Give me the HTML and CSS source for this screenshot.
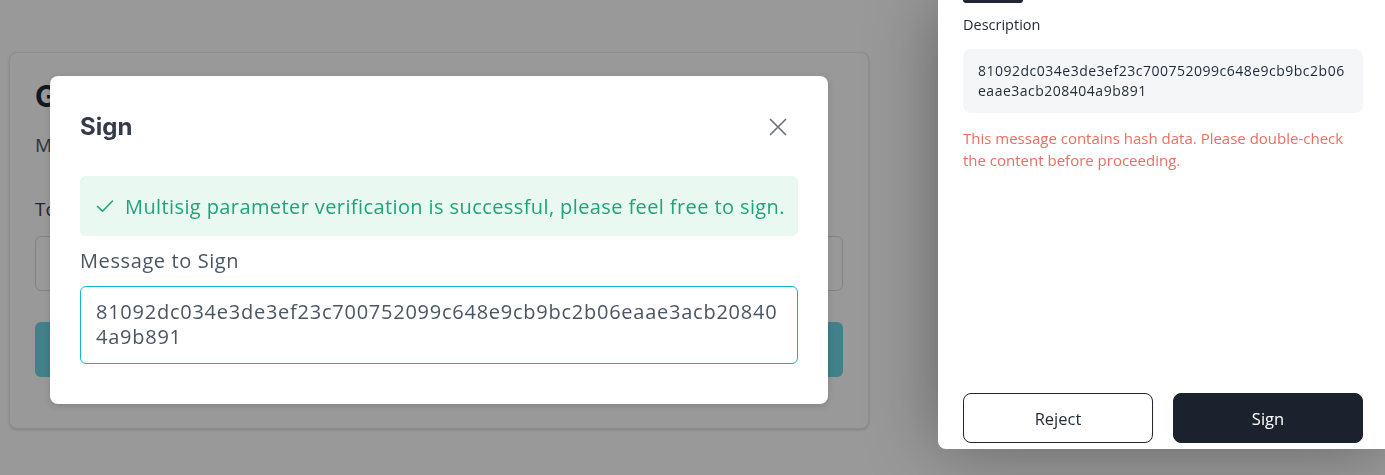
FILE: index.html
```html
<!DOCTYPE html>
<html lang="en">
<head>
<meta charset="utf-8">
<title>Sign</title>
<link rel="stylesheet" href="styles.css">
</head>
<body>
<main class="page">
  <section class="card">
    <h2 class="card-title">Generate Signature</h2>
    <p class="card-sub">Multisig message signing</p>
    <label class="card-label">To sign</label>
    <div class="card-input"></div>
    <div class="card-button"></div>
  </section>
</main>

<div class="backdrop"></div>

<div class="modal" role="dialog">
  <div class="modal-head">
    <h3 class="modal-title">Sign</h3>
    <button class="modal-close" aria-label="Close">
      <svg width="20" height="20" viewBox="0 0 20 20"><path d="M2.5 2.5 L17.5 17.5 M17.5 2.5 L2.5 17.5" stroke="#6b7280" stroke-width="1.7" stroke-linecap="round" fill="none"/></svg>
    </button>
  </div>
  <div class="alert">
    <svg class="alert-icon" width="20" height="20" viewBox="0 0 20 20"><path d="M2.5 10.5 L7.5 15.2 L17.5 5" stroke="#21a67a" stroke-width="1.6" fill="none" stroke-linecap="round" stroke-linejoin="round"/></svg>
    <span class="alert-text">Multisig parameter verification is successful, please feel free to sign.</span>
  </div>
  <div class="field-label">Message to Sign</div>
  <div class="message-box">81092dc034e3de3ef23c700752099c648e9cb9bc2b06eaae3acb208404a9b891</div>
</div>

<aside class="drawer">
  <div class="drawer-top"><span class="top-tag"></span></div>
  <div class="drawer-label">Description</div>
  <div class="desc-box">81092dc034e3de3ef23c700752099c648e9cb9bc2b06eaae3acb208404a9b891</div>
  <p class="warning">This message contains hash data. Please double-check the content before proceeding.</p>
  <div class="drawer-actions">
    <button class="btn btn-outline">Reject</button>
    <button class="btn btn-dark">Sign</button>
  </div>
</aside>
</body>
</html>
```
FILE: styles.css
```css
* { box-sizing: border-box; }
html, body { margin: 0; padding: 0; }
body {
  width: 1385px;
  height: 475px;
  overflow: hidden;
  background: #ffffff;
  font-family: "Open Sans", "Lato", sans-serif;
  color: #1f2937;
}

.page {
  padding: 52px 0 0 9px;
}
.card {
  width: 860px;
  height: 377px;
  background: #ffffff;
  border: 1px solid #ececec;
  border-radius: 8px;
  box-shadow: 0 1px 3px rgba(0,0,0,0.15);
  padding: 24px 25px 0 25px;
  display: flex;
  flex-direction: column;
}
.card-title {
  margin: 0;
  font-family: "Inter", sans-serif;
  font-size: 30px;
  line-height: 38px;
  font-weight: 700;
  color: #1f2937;
}
.card-sub {
  margin: 16px 0 0 0;
  font-size: 19px;
  line-height: 28px;
  color: #4b5563;
}
.card-label {
  margin-top: 36px;
  font-size: 19px;
  line-height: 28px;
  color: #374151;
}
.card-input {
  margin-top: 13px;
  height: 55px;
  border: 1px solid #d9d9d9;
  border-radius: 6px;
}
.card-button {
  margin-top: 31px;
  height: 55px;
  border-radius: 6px;
  background: #6fd5e6;
}

.backdrop {
  position: fixed;
  inset: 0;
  background: rgba(0,0,0,0.4);
}

.modal {
  position: absolute;
  left: 50px;
  top: 76px;
  width: 778px;
  height: 328px;
  background: #ffffff;
  border-radius: 8px;
  box-shadow: 0 2px 6px rgba(0,0,0,0.15);
  padding: 30px 30px 40px 30px;
  display: flex;
  flex-direction: column;
}
.modal-head {
  height: 42px;
  display: flex;
  align-items: center;
  justify-content: space-between;
  margin-bottom: 28px;
}
.modal-title {
  margin: 0;
  font-family: "Inter", sans-serif;
  font-size: 24px;
  font-weight: 700;
  color: #343c4c;
  line-height: 32px;
}
.modal-close {
  border: 0;
  background: none;
  padding: 0;
  width: 20px;
  height: 20px;
  margin-right: 10px;
  display: flex;
}
.alert {
  height: 60px;
  background: #e9f8f1;
  border-radius: 6px;
  display: flex;
  align-items: center;
  gap: 10px;
  padding: 0 15px;
}
.alert-icon { flex: none; }
.alert-text {
  font-size: 20px;
  letter-spacing: 0.4px;
  color: #1fa37b;
  white-space: nowrap;
}
.field-label {
  margin-top: 12px;
  font-size: 20px;
  letter-spacing: 0.6px;
  line-height: 26px;
  color: #4b5563;
}
.message-box {
  margin-top: 12px;
  height: 78px;
  border: 1px solid #13b4d2;
  border-radius: 6px;
  padding: 12px 15px;
  font-size: 20px;
  line-height: 25px;
  color: #4b5563;
  word-break: break-all;
  letter-spacing: 0.75px;
}

.drawer {
  position: fixed;
  top: 0;
  right: 0;
  width: 447px;
  height: 449px;
  background: #ffffff;
  border-bottom-left-radius: 8px;
  box-shadow: 0 0 70px rgba(0,0,0,0.35);
  padding: 0 22px 6px 25px;
  display: flex;
  flex-direction: column;
}
.drawer-top { height: 3px; }
.top-tag {
  display: block;
  width: 60px;
  height: 3px;
  background: #1f2636;
  border-radius: 0 0 3px 3px;
}
.drawer-label {
  margin-top: 12px;
  font-size: 14.5px;
  line-height: 20px;
  color: #1f2937;
}
.desc-box {
  margin-top: 14px;
  background: #f5f6f8;
  border-radius: 8px;
  padding: 12px 12px 12px 15px;
  font-size: 14px;
  line-height: 20px;
  color: #1f2937;
  word-break: break-all;
  letter-spacing: 0.5px;
}
.warning {
  margin: 14px 0 0 0;
  max-width: 392px;
  font-size: 15px;
  line-height: 22px;
  color: #e76f61;
}
.drawer-actions {
  margin-top: auto;
  display: flex;
  gap: 20px;
}
.btn {
  flex: 1;
  height: 50px;
  border-radius: 8px;
  font-family: "Open Sans", sans-serif;
  font-size: 16.5px;
  cursor: pointer;
}
.btn-outline {
  background: #ffffff;
  border: 1px solid #1f2636;
  color: #1f2937;
}
.btn-dark {
  background: #1c222d;
  border: 1px solid #1c222d;
  color: #ffffff;
  font-weight: 500;
}
```
